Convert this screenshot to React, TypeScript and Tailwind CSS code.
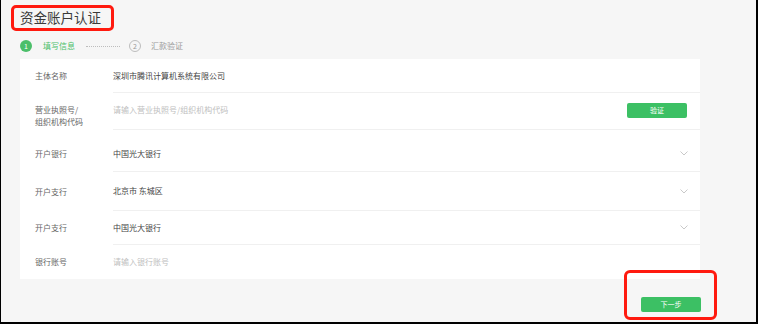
import React from "react";

const FONT = { fontFamily: '"Noto Sans CJK SC", "Noto Sans", sans-serif' };

type Row = {
  label: string[];
  value: string;
  placeholder?: boolean;
  h: string;
  pad?: string;
  right?: "chevron" | "verify";
  last?: boolean;
};

const ROWS: Row[] = [
  { label: ["主体名称"], value: "深圳市腾讯计算机系统有限公司", h: "h-[34px]" },
  {
    label: ["营业执照号/", "组织机构代码"],
    value: "请输入营业执照号/组织机构代码",
    placeholder: true,
    h: "h-[37px]",
    right: "verify",
  },
  { label: ["开户银行"], value: "中国光大银行", h: "h-[42px]", pad: "pt-[6px]", right: "chevron" },
  { label: ["开户支行"], value: "北京市 东城区", h: "h-[39px]", right: "chevron" },
  { label: ["开户支行"], value: "中国光大银行", h: "h-[34px]", right: "chevron" },
  { label: ["银行账号"], value: "请输入银行账号", placeholder: true, h: "h-[34px]", last: true },
];

function Chevron() {
  return (
    <svg width="8" height="5" viewBox="0 0 8 5" className="block">
      <polyline points="0.5,0.5 4,4 7.5,0.5" fill="none" stroke="#c9c9c9" strokeWidth="1" />
    </svg>
  );
}

function FormRow({ row }: { row: Row }) {
  const multi = row.label.length > 1;
  return (
    <div className={`flex ${row.h}`}>
      <div
        className={`w-[93px] shrink-0 pl-[15px] text-[8px] leading-[12px] text-[#666] flex flex-col ${
          multi ? "justify-start pt-[11px]" : `justify-center ${row.pad ?? ""}`
        }`}
      >
        {row.label.map((l) => (
          <span key={l}>{l}</span>
        ))}
      </div>
      <div
        className={`flex-1 flex items-center justify-between pr-[12px] ${row.pad ?? ""} ${
          row.last ? "" : "border-b border-[#f0f0f0]"
        }`}
      >
        <span
          className={`text-[8px] leading-[12px] ${
            row.placeholder ? "text-[#c0c0c0]" : "text-[#444]"
          } ${multi ? "-mt-[2px]" : ""}`}
        >
          {row.value}
        </span>
        {row.right === "chevron" && <Chevron />}
        {row.right === "verify" && (
          <button className="w-[60px] h-[15px] -mt-[2px] mr-[1px] rounded-[2px] bg-[#3cc064] text-white text-[7px] leading-[15px]">
            验证
          </button>
        )}
      </div>
    </div>
  );
}

export default function App() {
  return (
    <div
      className="w-[758px] h-[324px] bg-[#f6f6f6] border-l border-r-2 border-b-2 border-black overflow-hidden"
      style={FONT}
    >
      {/* Title (annotated) */}
      <div className="ml-[10px] mt-[5px] w-[103px] h-[26px] border-[3px] border-[#ff1a0f] rounded-[5px] flex items-center pl-[6px]">
        <span className="text-[13.5px] leading-none text-[#3a3a3a]">资金账户认证</span>
      </div>

      {/* Stepper */}
      <div className="mt-[9px] h-[12px] ml-[19px] flex items-center">
        <span className="w-[12px] h-[12px] rounded-full bg-[#4cbf6a] text-white text-[7px] leading-[12px] text-center">
          1
        </span>
        <span className="ml-[11px] text-[8px] leading-none text-[#4cbf6a]">填写信息</span>
        <span className="ml-[11px] w-[34px] border-t border-dotted border-[#bdbdbd]" />
        <span className="ml-[9px] w-[12px] h-[12px] rounded-full border border-[#bdbdbd] text-[#999] text-[7px] leading-[10px] text-center">
          2
        </span>
        <span className="ml-[10px] text-[8px] leading-none text-[#999]">汇款验证</span>
      </div>

      {/* Form card */}
      <div className="ml-[19px] mt-[7px] w-[680px] bg-white">
        {ROWS.map((r, i) => (
          <FormRow key={i} row={r} />
        ))}
      </div>

      {/* Next step */}
      <div className="ml-[640px] mt-[9px] relative w-[60px]">
        <button className="w-[60px] h-[15px] rounded-[2px] bg-[#3cc064] text-white text-[7px] leading-[15px]">
          下一步
        </button>
        <div className="absolute -left-[17px] -top-[18px] w-[93px] h-[50px] border-[3px] border-[#ff1a0f] rounded-[6px] pointer-events-none" />
      </div>
    </div>
  );
}
